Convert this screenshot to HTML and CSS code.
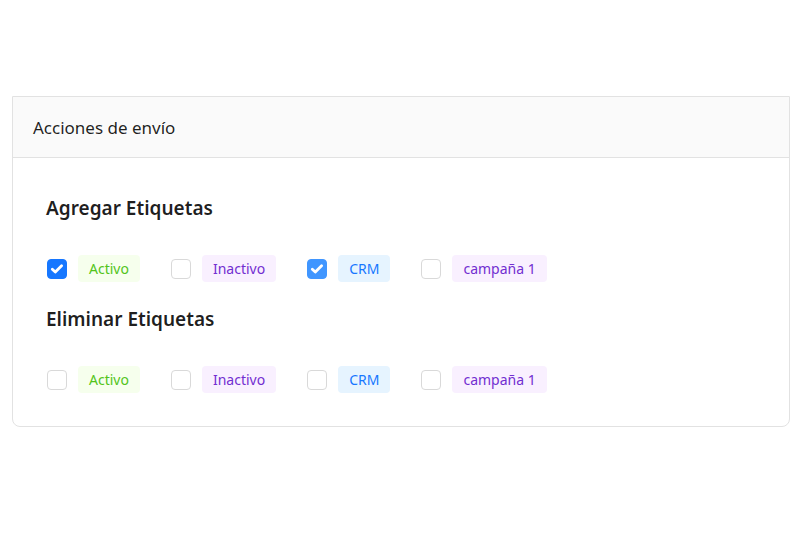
FILE: index.html
```html
<!DOCTYPE html>
<html lang="es">
<head>
<meta charset="utf-8">
<link rel="stylesheet" href="styles.css">
</head>
<body>
<div class="card">
  <div class="card-head">Acciones de envío</div>
  <div class="card-body">
    <h3 class="section-title">Agregar Etiquetas</h3>
    <div class="tag-row">
      <label class="item"><span class="cb checked"><svg viewBox="0 0 18 18"><path d="M4.3 9.2l3 2.9 6.3-6.4" /></svg></span><span class="tag green">Activo</span></label>
      <label class="item"><span class="cb"></span><span class="tag purple">Inactivo</span></label>
      <label class="item"><span class="cb checked hover"><svg viewBox="0 0 18 18"><path d="M4.3 9.2l3 2.9 6.3-6.4" /></svg></span><span class="tag blue">CRM</span></label>
      <label class="item"><span class="cb"></span><span class="tag purple">campaña 1</span></label>
    </div>
    <h3 class="section-title second">Eliminar Etiquetas</h3>
    <div class="tag-row">
      <label class="item"><span class="cb"></span><span class="tag green">Activo</span></label>
      <label class="item"><span class="cb"></span><span class="tag purple">Inactivo</span></label>
      <label class="item"><span class="cb"></span><span class="tag blue">CRM</span></label>
      <label class="item"><span class="cb"></span><span class="tag purple">campaña 1</span></label>
    </div>
  </div>
</div>
</body>
</html>
```
FILE: styles.css
```css
html, body {
  margin: 0;
  padding: 0;
  background: #ffffff;
}
body {
  font-family: "Noto Sans", "Open Sans", sans-serif;
  color: rgba(0, 0, 0, 0.88);
  padding: 96px 10px 0 12px;
}
.card {
  border: 1px solid #e2e2e2;
  border-radius: 0 0 8px 8px;
  background: #fff;
}
.card-head {
  background: #fafafa;
  border-bottom: 1px solid #e2e2e2;
  height: 60px;
  display: flex;
  align-items: center;
  padding-left: 20px;
  font-size: 17px;
  color: rgba(0,0,0,0.88);
}
.card-body {
  padding: 38px 33px 33px 34px;
}
.section-title {
  margin: 0 0 35px -1px;
  font-size: 19px;
  line-height: 24px;
  font-weight: 600;
}
.section-title.second {
  margin-top: 25px;
}
.tag-row {
  display: flex;
  gap: 31px;
  height: 27px;
  align-items: center;
}
.item {
  display: flex;
  align-items: center;
  gap: 11px;
}
.cb {
  width: 20px;
  height: 20px;
  box-sizing: border-box;
  border: 1px solid #d9d9d9;
  border-radius: 4px;
  background: #fff;
  display: flex;
}
.cb.checked {
  background: #1677ff;
  border-color: #1677ff;
}
.cb.checked.hover {
  background: #4096ff;
  border-color: #4096ff;
}
.cb svg {
  width: 18px;
  height: 18px;
}
.cb path {
  fill: none;
  stroke: #fff;
  stroke-width: 2.8;
  stroke-linecap: round;
  stroke-linejoin: round;
}
.tag {
  height: 27px;
  line-height: 27px;
  padding: 0 11px;
  border-radius: 4px;
  font-size: 14px;
}
.green { background: #f6ffed; color: #52c41a; }
.purple { background: #f9f0ff; color: #722ed1; }
.blue { background: #e6f4ff; color: #1677ff; }
```
